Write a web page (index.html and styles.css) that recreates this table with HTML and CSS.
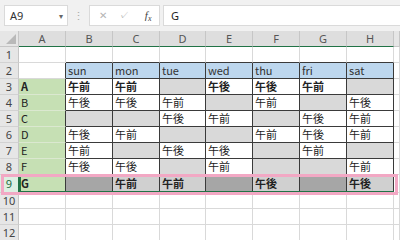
FILE: index.html
```html
<!DOCTYPE html>
<html lang="ja">
<head>
  <meta charset="UTF-8">
  <title>Sheet1</title>
  <link rel="stylesheet" href="styles.css">
</head>
<body>
  <div class="toolbar">
    <div class="namebox">A9<span class="caret">&#9662;</span></div>
    <div class="dots">&#8942;</div>
    <div class="fxbox">
      <span class="fx-btn">&#10005;</span>
      <span class="fx-btn">&#10003;</span>
      <span class="fx-btn fx">f<span class="x">x</span></span>
    </div>
    <div class="formula">G</div>
  </div>

  <div class="sheet">
    <div class="row head">
      <div class="corner"></div>
      <div class="ch">A</div><div class="ch">B</div><div class="ch">C</div><div class="ch">D</div>
      <div class="ch">E</div><div class="ch">F</div><div class="ch">G</div><div class="ch">H</div>
      <div class="ch off"></div>
    </div>

    <div class="row">
      <div class="rh">1</div>
      <div class="c"></div>
      <div class="c bb"></div><div class="c bb"></div><div class="c bb"></div><div class="c bb"></div>
      <div class="c bb"></div><div class="c bb"></div><div class="c bb"></div>
      <div class="c"></div>
    </div>

    <div class="row">
      <div class="rh">2</div>
      <div class="c br"></div>
      <div class="c t blue">sun</div><div class="c t blue">mon</div><div class="c t blue">tue</div><div class="c t blue">wed</div>
      <div class="c t blue">thu</div><div class="c t blue">fri</div><div class="c t blue">sat</div>
      <div class="c"></div>
    </div>

    <div class="row">
      <div class="rh">3</div>
      <div class="c grn br b">A</div>
      <div class="c t b">午前</div><div class="c t b">午前</div><div class="c t g"></div><div class="c t b">午後</div>
      <div class="c t b">午後</div><div class="c t b">午前</div><div class="c t g"></div>
      <div class="c"></div>
    </div>

    <div class="row">
      <div class="rh">4</div>
      <div class="c grn br">B</div>
      <div class="c t">午後</div><div class="c t">午後</div><div class="c t">午前</div><div class="c t g"></div>
      <div class="c t">午前</div><div class="c t g"></div><div class="c t">午後</div>
      <div class="c"></div>
    </div>

    <div class="row">
      <div class="rh">5</div>
      <div class="c grn br">C</div>
      <div class="c t g"></div><div class="c t g"></div><div class="c t">午後</div><div class="c t">午前</div>
      <div class="c t g"></div><div class="c t">午後</div><div class="c t">午前</div>
      <div class="c"></div>
    </div>

    <div class="row">
      <div class="rh">6</div>
      <div class="c grn br">D</div>
      <div class="c t">午後</div><div class="c t">午前</div><div class="c t g"></div><div class="c t g"></div>
      <div class="c t">午前</div><div class="c t">午後</div><div class="c t">午前</div>
      <div class="c"></div>
    </div>

    <div class="row">
      <div class="rh">7</div>
      <div class="c grn br">E</div>
      <div class="c t">午前</div><div class="c t g"></div><div class="c t">午後</div><div class="c t">午後</div>
      <div class="c t g"></div><div class="c t">午前</div><div class="c t g"></div>
      <div class="c"></div>
    </div>

    <div class="row">
      <div class="rh">8</div>
      <div class="c grn br">F</div>
      <div class="c t">午後</div><div class="c t">午後</div><div class="c t g"></div><div class="c t">午前</div>
      <div class="c t g"></div><div class="c t g"></div><div class="c t">午前</div>
      <div class="c"></div>
    </div>

    <div class="row sel">
      <div class="rh on">9</div>
      <div class="c grn br b">G</div>
      <div class="c t sd"></div><div class="c t sl b">午前</div><div class="c t sl b">午前</div><div class="c t sd"></div>
      <div class="c t sl b">午後</div><div class="c t sd"></div><div class="c t sl b">午後</div>
      <div class="c"></div>
    </div>

    <div class="row">
      <div class="rh">10</div>
      <div class="c"></div><div class="c"></div><div class="c"></div><div class="c"></div><div class="c"></div>
      <div class="c"></div><div class="c"></div><div class="c"></div><div class="c"></div>
    </div>

    <div class="row">
      <div class="rh">11</div>
      <div class="c"></div><div class="c"></div><div class="c"></div><div class="c"></div><div class="c"></div>
      <div class="c"></div><div class="c"></div><div class="c"></div><div class="c"></div>
    </div>

    <div class="row">
      <div class="rh">12</div>
      <div class="c"></div><div class="c"></div><div class="c"></div><div class="c"></div><div class="c"></div>
      <div class="c"></div><div class="c"></div><div class="c"></div><div class="c"></div>
    </div>

    <!-- selection A9:H9 and the pink highlight over row 9 -->
    <div class="selection"></div>
    <div class="highlight"></div>
  </div>
</body>
</html>
```

FILE: styles.css
```css
* {
  margin: 0;
  padding: 0;
  box-sizing: border-box;
}
body {
  width: 400px;
  height: 240px;
  overflow: hidden;
  background-color: #fff;
  font-family: "Noto Sans CJK JP", sans-serif;
  color: #222;
}

/* formula bar */
.toolbar {
  height: 31px;
  background-color: #f1f1f1;
  display: flex;
  align-items: flex-start;
  padding: 5px 0 0 4px;
  font-family: "Noto Sans", sans-serif;
}
.namebox {
  width: 64px;
  height: 21px;
  background-color: #fff;
  border: 1px solid #dadada;
  font-size: 11px;
  line-height: 19px;
  padding-left: 5px;
  color: #333;
  display: flex;
  justify-content: space-between;
}
.caret {
  font-size: 8px;
  color: #666;
  padding-right: 4px;
}
.dots {
  width: 21px;
  text-align: center;
  color: #aaa;
  font-size: 11px;
  line-height: 21px;
}
.fxbox {
  width: 71px;
  height: 21px;
  background-color: #fff;
  border: 1px solid #dadada;
  display: flex;
  justify-content: space-around;
  align-items: center;
  padding: 0 2px;
}
.fx-btn {
  font-size: 10px;
  color: #b4b4b4;
  width: 18px;
  text-align: center;
  line-height: 19px;
}
.fx {
  font-family: "Liberation Serif", serif;
  font-style: italic;
  color: #444;
  font-size: 11px;
  padding-left: 4px;
}
.fx .x {
  font-size: 8px;
  position: relative;
  top: 2px;
}
.formula {
  flex: 1;
  height: 21px;
  margin-left: 3px;
  background-color: #fff;
  border: 1px solid #dadada;
  border-right: none;
  font-size: 11px;
  line-height: 19px;
  padding-left: 7px;
  color: #222;
}

/* grid */
.sheet {
  position: relative;
}
.row {
  display: grid;
  grid-template-columns: 19px 47px 47px 47px 46px 47px 47px 47px 47px 1fr;
  height: 16px;
}
.row.sel {
  height: 18px;
}
.head {
  background-color: #e6e6e6;
}
.corner {
  position: relative;
  border-right: 1px solid #c6c6c6;
  border-bottom: 1px solid #c6c6c6;
}
.corner::after {
  content: "";
  position: absolute;
  right: 2px;
  bottom: 2px;
  border-left: 10px solid transparent;
  border-bottom: 10px solid #b9b9b9;
}
.ch {
  text-align: center;
  font-family: "Noto Sans", sans-serif;
  font-size: 11px;
  line-height: 15px;
  color: #555;
  background-color: #dedede;
  border-right: 1px solid #c6c6c6;
  border-bottom: 1px solid #217346;
}
.ch.off {
  background-color: #e6e6e6;
  border-bottom-color: #c6c6c6;
}
.rh {
  text-align: center;
  font-family: "Noto Sans", sans-serif;
  font-size: 11px;
  line-height: 15px;
  color: #444;
  background-color: #e6e6e6;
  border-right: 1px solid #c6c6c6;
  border-bottom: 1px solid #d2d2d2;
}
.rh.on {
  background-color: #dcefe2;
  color: #1e6b41;
  line-height: 17px;
  border-right: 1px solid #217346;
}

/* cells */
.c {
  font-size: 11px;
  line-height: 15px;
  padding-left: 2px;
  white-space: nowrap;
  overflow: hidden;
  border-right: 1px solid #d9d9d9;
  border-bottom: 1px solid #d9d9d9;
}
.sel .c {
  line-height: 17px;
}
.c.t {
  border-right-color: #3a3a3a;
  border-bottom-color: #3a3a3a;
}
.c.bb {
  border-bottom-color: #3a3a3a;
}
.c.br {
  border-right-color: #3a3a3a;
}
.b {
  font-weight: bold;
}
.blue {
  background-color: #bdd7ee;
  color: #333;
}
.grn {
  background-color: #c6e0b4;
  border-bottom-color: #dbe8d0;
}
.g {
  background-color: #d9d9d9;
}
.sd {
  background-color: #a6a6a6;
}
.sl {
  background-color: #d0d0d0;
}

/* overlays */
.selection {
  position: absolute;
  left: 19px;
  top: 144px;
  width: 375px;
  height: 18px;
  border-left: 2px solid #217346;
  border-bottom: 2px solid #217346;
}
.highlight {
  position: absolute;
  left: 1px;
  top: 143px;
  width: 397px;
  height: 21px;
  border: 3px solid #f2a8c4;
}
```
